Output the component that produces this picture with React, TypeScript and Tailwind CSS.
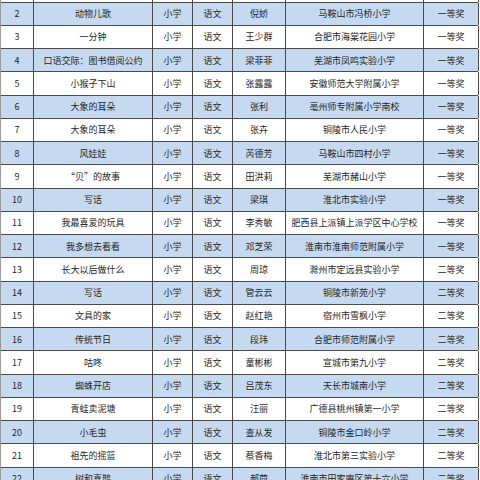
const rows: [number, string, string, string, string][] = [
  [2, '动物儿歌', '倪娇', '马鞍山市冯桥小学', '一等奖'],
  [3, '一分钟', '王少群', '合肥市海棠花园小学', '一等奖'],
  [4, '口语交际：图书借阅公约', '梁菲菲', '芜湖市凤鸣实验小学', '一等奖'],
  [5, '小猴子下山', '张露露', '安徽师范大学附属小学', '一等奖'],
  [6, '大象的耳朵', '张利', '亳州师专附属小学南校', '一等奖'],
  [7, '大象的耳朵', '张卉', '铜陵市人民小学', '一等奖'],
  [8, '风娃娃', '芮德芳', '马鞍山市四村小学', '一等奖'],
  [9, '“贝”的故事', '田洪莉', '芜湖市赭山小学', '一等奖'],
  [10, '写话', '梁琪', '淮北市实验小学', '一等奖'],
  [11, '我最喜爱的玩具', '李秀敏', '肥西县上派镇上派学区中心学校', '一等奖'],
  [12, '我多想去看看', '邓芝荣', '淮南市淮南师范附属小学', '一等奖'],
  [13, '长大以后做什么', '周琼', '滁州市定远县实验小学', '二等奖'],
  [14, '写话', '管云云', '铜陵市新苑小学', '二等奖'],
  [15, '文具的家', '赵红艳', '宿州市雪枫小学', '二等奖'],
  [16, '传统节日', '段玮', '合肥市师范附属小学', '二等奖'],
  [17, '咕咚', '童彬彬', '宣城市第九小学', '二等奖'],
  [18, '蜘蛛开店', '吕茂东', '天长市城南小学', '二等奖'],
  [19, '青蛙卖泥塘', '汪丽', '广德县桃州镇第一小学', '二等奖'],
  [20, '小毛虫', '查从发', '铜陵市金口岭小学', '二等奖'],
  [21, '祖先的摇篮', '蔡香梅', '淮北市第三实验小学', '二等奖'],
  [22, '树和喜鹊', '郝茴', '淮南市田家庵区第十六小学', '二等奖'],
]

const cols = 'grid grid-cols-[33px_119px_40px_40px_53px_138px_55px]'
const cell = 'flex items-center justify-center border-r border-[#4a4a4a] whitespace-nowrap overflow-hidden'

function Row({ cells, blue }: { cells: string[]; blue: boolean }) {
  return (
    <div
      className={`${cols} h-[23.25px] border-b border-[#4a4a4a] ${blue ? 'bg-[#c5d9f0]' : 'bg-white'}`}
    >
      {cells.map((c, i) => (
        <div key={i} className={cell}>
          {c}
        </div>
      ))}
    </div>
  )
}

export default function App() {
  return (
    <div className="w-[480px] h-[480px] overflow-hidden bg-white">
      <div
        className="w-[478px] mt-[-20.75px] border-l border-[#9a9a9a] text-[9px] leading-none text-[#262626]"
        style={{ fontFamily: '"Noto Sans CJK SC", "Liberation Sans", sans-serif' }}
      >
        {/* row 1 is scrolled off above */}
        <Row cells={['', '', '', '', '', '', '']} blue={false} />
        {rows.map(([n, title, name, school, award]) => (
          <Row
            key={n}
            cells={[String(n), title, '小学', '语文', name, school, award]}
            blue={n % 2 === 0}
          />
        ))}
      </div>
    </div>
  )
}
